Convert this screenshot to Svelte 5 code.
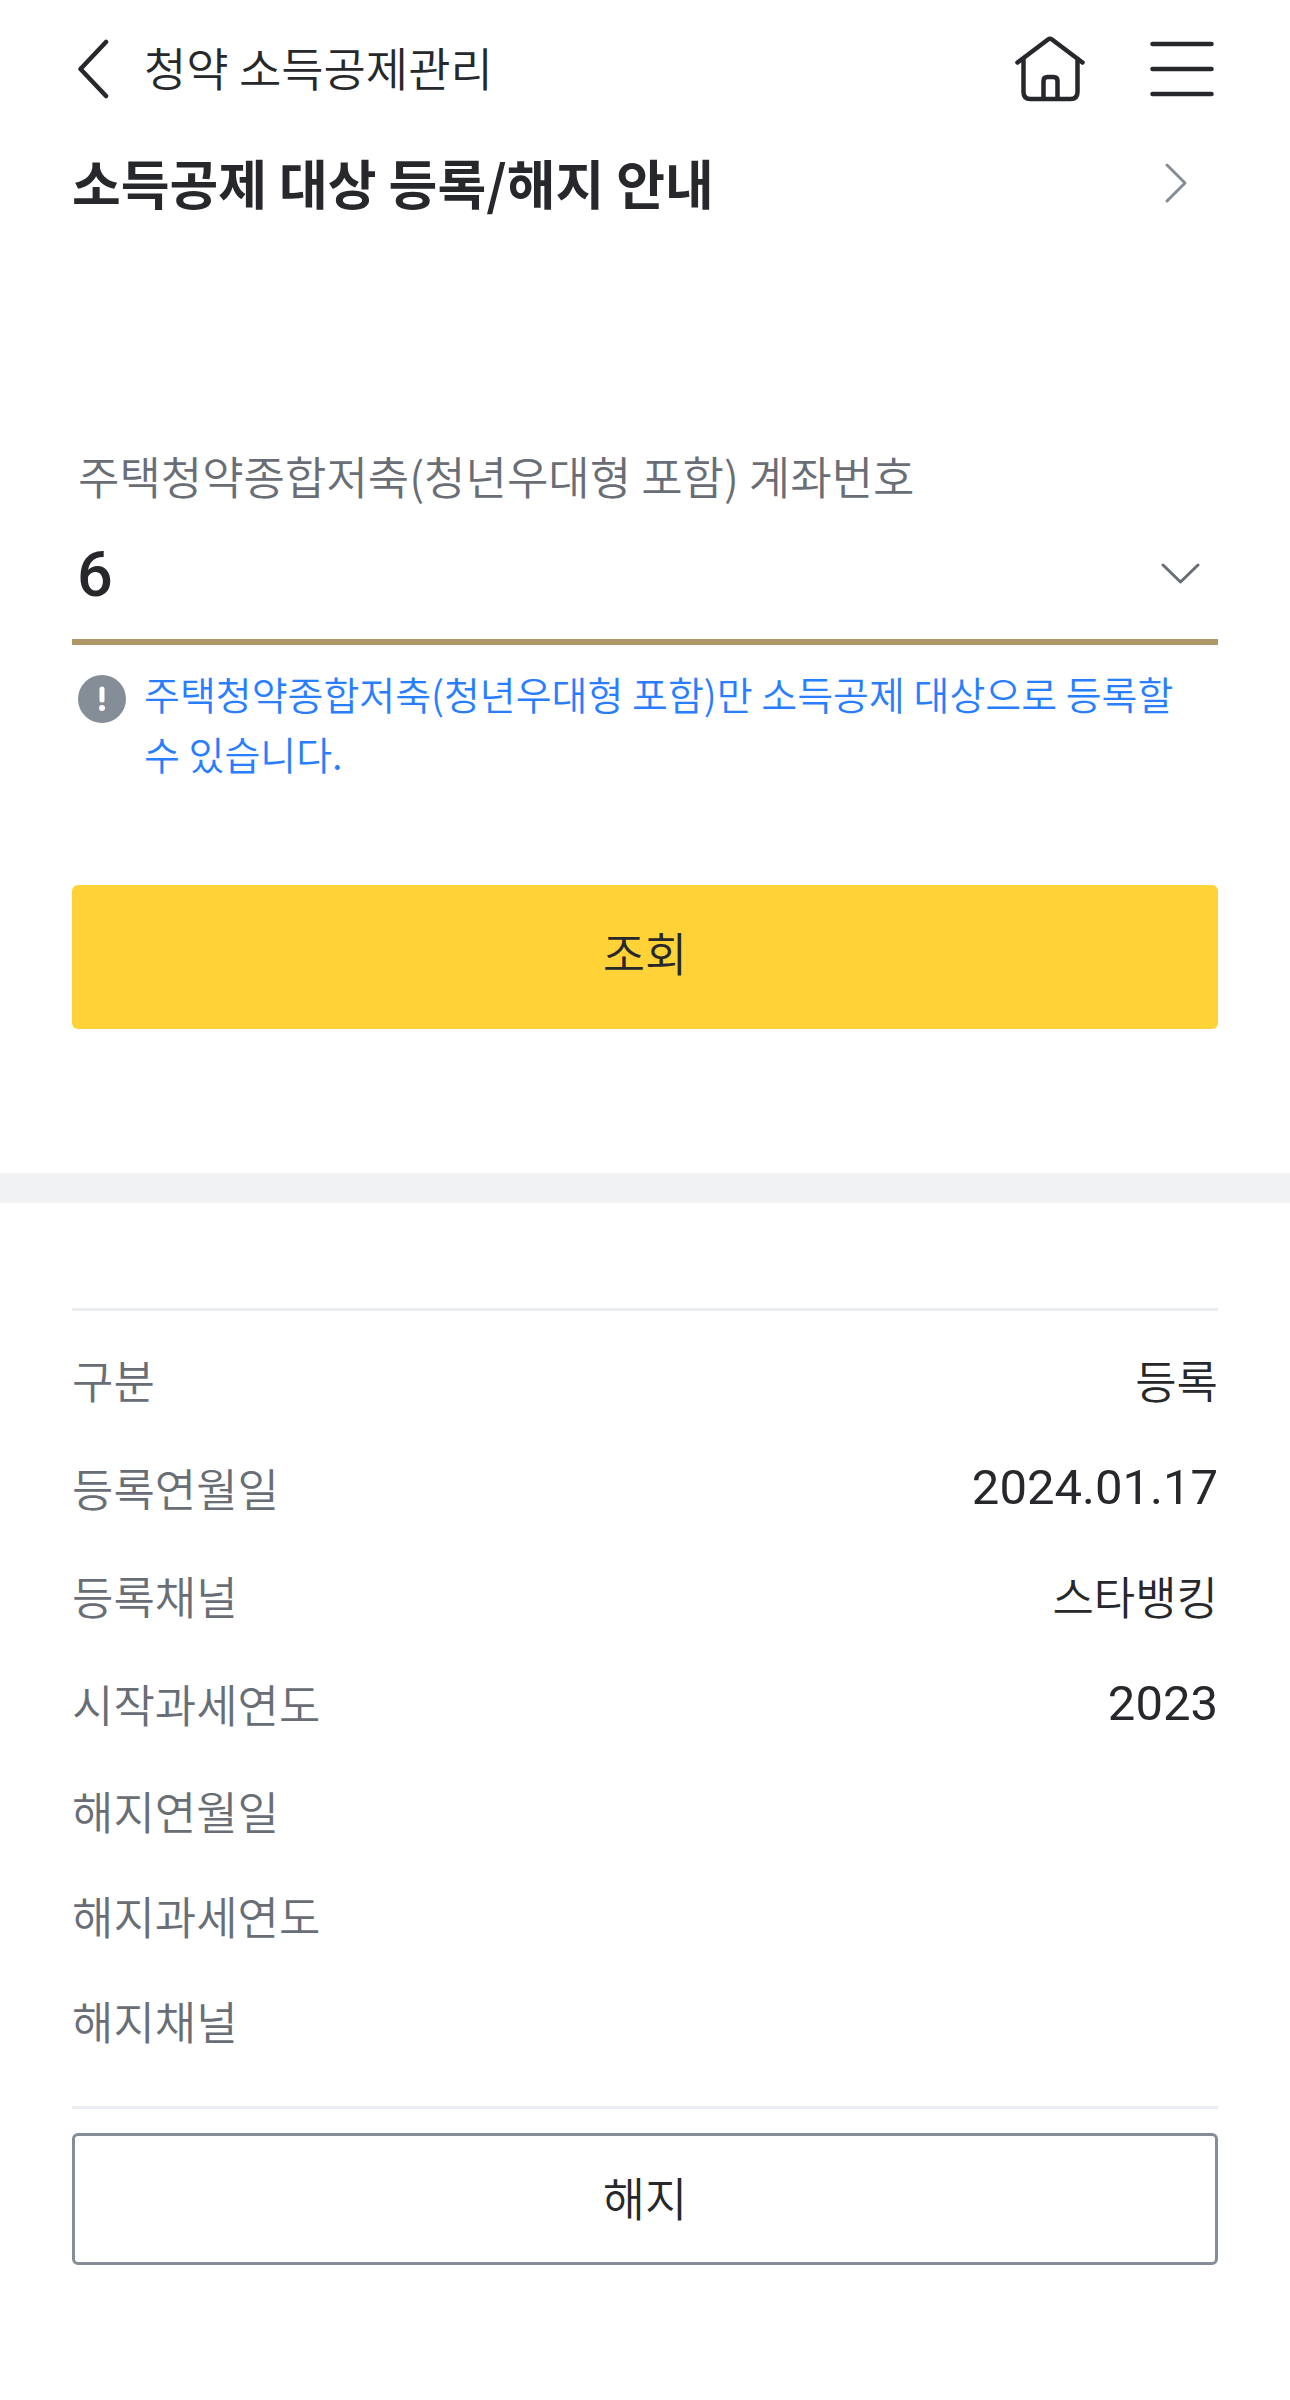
<script lang="ts">
  type Detail = {
    label: string;
    value?: string;
    numeric?: boolean;
  };

  const accounts = ['6'];

  const details: Detail[] = [
    { label: '구분', value: '등록' },
    { label: '등록연월일', value: '2024.01.17', numeric: true },
    { label: '등록채널', value: '스타뱅킹' },
    { label: '시작과세연도', value: '2023', numeric: true },
    { label: '해지연월일' },
    { label: '해지과세연도' },
    { label: '해지채널' },
  ];

  let account = $state(accounts[0]);
</script>

<div class="page">
  <header class="header">
    <button type="button" class="icon-btn" aria-label="뒤로">
      <svg width="32" height="60" viewBox="0 0 32 60">
        <path d="M28 3 L2.500 30 L28 57" stroke-width="4.500" />
      </svg>
    </button>
    <h1 class="header-title">청약 소득공제관리</h1>
    <nav class="header-actions">
      <a href="#home" class="icon-btn" aria-label="홈">
        <svg width="72" height="68" viewBox="0 2 72 68">
          <g stroke-width="4.500">
            <path d="M3.500 29.500 L34 6.500 Q36 5 38 6.500 L68.500 29.500" />
            <path d="M9.500 26 V59 Q9.500 66 16.500 66 H56.500 Q63.500 66 63.500 59 V26" />
            <path d="M29.500 65 V48 Q29.500 44 33.500 44 H39.500 Q43.500 44 43.500 48 V65" />
          </g>
        </svg>
      </a>
      <button type="button" class="icon-btn" aria-label="전체메뉴">
        <svg width="64" height="56" viewBox="0 0 64 56">
          <path d="M2.500 3 H61.500 M2.500 28 H61.500 M2.500 53 H61.500" stroke-width="4.500" />
        </svg>
      </button>
    </nav>
  </header>

  <main>
    <a href="#guide" class="guide">
      <h2 class="guide-title">소득공제 대상 등록/해지 안내</h2>
      <svg width="24" height="40" viewBox="0 0 24 40">
        <path d="M3 2 L21 20 L3 38" stroke-width="3" />
      </svg>
    </a>

    <form class="search" onsubmit={(e) => e.preventDefault()}>
      <label class="search-label" for="account">주택청약종합저축(청년우대형 포함) 계좌번호</label>
      <div class="select-box">
        <select id="account" bind:value={account}>
          {#each accounts as item (item)}
            <option value={item}>{item}</option>
          {/each}
        </select>
        <svg class="select-arrow" width="40" height="24" viewBox="0 0 40 24">
          <path d="M3 3 L20.500 20 L38 3" stroke-width="3" />
        </svg>
      </div>
      <p class="notice">
        <svg class="notice-icon" width="48" height="48" viewBox="0 0 48 48">
          <circle cx="24" cy="24" r="24" />
          <path d="M24 14 V25" stroke-width="5" />
          <circle class="dot" cx="24" cy="33" r="3" />
        </svg>
        <span>주택청약종합저축(청년우대형 포함)만 소득공제 대상으로 등록할 수 있습니다.</span>
      </p>
      <button type="submit" class="btn btn--primary">조회</button>
    </form>

    <section class="result">
      <dl class="details">
        {#each details as { label, value, numeric } (label)}
          <div class="detail" class:detail--empty={!value}>
            <dt>{label}</dt>
            <dd class:numeric>{value ?? ''}</dd>
          </div>
        {/each}
      </dl>
      <button type="button" class="btn btn--outline">해지</button>
    </section>
  </main>
</div>

<style>
  :global(body) {
    background: #fff;
  }

  .page {
    --ink: #26282c;
    --ink-dim: #696e76;
    --gray: #858d96;
    --line: #e9edf1;
    --gutter: 72px;
    font-family: 'Noto Sans CJK KR', sans-serif;
    font-size: 45px;
    font-weight: 350;
    line-height: 60px;
    color: var(--ink);
    padding-bottom: 135px;
  }

  svg {
    display: block;
    flex: none;
    fill: none;
    stroke: currentColor;
    stroke-linecap: round;
    stroke-linejoin: round;
  }

  h1,
  h2,
  p,
  dl,
  dd {
    margin: 0;
  }

  button,
  select {
    font: inherit;
    color: inherit;
    cursor: pointer;
  }

  .header {
    display: flex;
    align-items: center;
    height: 138px;
    padding: 0 76px 0 78px;
  }

  .icon-btn {
    padding: 0;
    border: none;
    background: none;
    color: var(--ink);
  }

  .header-title {
    margin-left: 34px;
    padding-bottom: 6px;
    font-size: 46px;
    font-weight: 350;
  }

  .header-actions {
    display: flex;
    align-items: center;
    gap: 64px;
    margin-left: auto;
  }

  .guide {
    display: flex;
    align-items: center;
    justify-content: space-between;
    height: 90px;
    padding: 0 102px 0 var(--gutter);
    color: inherit;
    text-decoration: none;
  }

  .guide svg {
    color: var(--gray);
  }

  .guide-title {
    padding-bottom: 3px;
    font-size: 53px;
    font-weight: 700;
  }

  .search {
    padding: 218px var(--gutter) 144px;
    border-bottom: 30px solid #f1f2f4;
  }

  .search-label {
    display: block;
    padding-left: 6px;
    color: var(--ink-dim);
  }

  .select-box {
    position: relative;
    margin-top: 10px;
    padding-bottom: 6px;
    border-bottom: 6px solid #b09768;
  }

  .select-box select {
    display: block;
    width: 100%;
    height: 117px;
    padding: 0 60px 0 5px;
    border: none;
    outline: none;
    background: none;
    appearance: none;
    font-family: Roboto, 'Noto Sans CJK KR', sans-serif;
    font-size: 63px;
    font-weight: 500;
  }

  .select-arrow {
    position: absolute;
    top: 46px;
    right: 18px;
    color: var(--ink-dim);
    pointer-events: none;
  }

  .notice {
    display: flex;
    gap: 18px;
    margin: 18px 0 102px;
    padding: 0 24px 0 6px;
    font-size: 39px;
    color: #287eff;
  }

  .notice-icon {
    margin-top: 12px;
    color: #fff;
  }

  .notice-icon circle {
    fill: var(--gray);
    stroke: none;
  }

  .notice-icon .dot {
    fill: #fff;
  }

  .btn {
    display: block;
    width: 100%;
    padding: 0 0 6px;
    border-radius: 6px;
    font-size: 46px;
  }

  .btn--primary {
    height: 144px;
    padding-bottom: 12px;
    border: none;
    background: #ffd338;
  }

  .btn--outline {
    height: 132px;
    border: 3px solid var(--gray);
    background: #fff;
  }

  .result {
    padding: 105px var(--gutter) 0;
  }

  .details {
    margin-bottom: 24px;
    padding: 15px 0 33px;
    border-top: 3px solid var(--line);
    border-bottom: 3px solid var(--line);
  }

  .detail {
    display: flex;
    align-items: center;
    justify-content: space-between;
    min-height: 108px;
  }

  .detail--empty {
    min-height: 105px;
  }

  dt {
    color: var(--ink-dim);
  }

  .numeric {
    font-family: Roboto, sans-serif;
    font-size: 49px;
    font-weight: 400;
  }
</style>
